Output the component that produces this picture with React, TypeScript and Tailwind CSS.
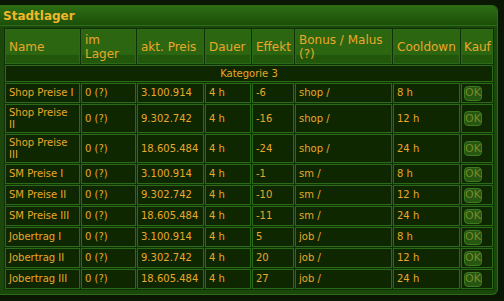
import React from 'react';

interface Row {
  name: string;
  price: string;
  effect: string;
  bonus: string;
  cooldown: string;
  tall?: boolean;
}

const rows: Row[] = [
  { name: 'Shop Preise I', price: '3.100.914', effect: '-6', bonus: 'shop /', cooldown: '8 h' },
  { name: 'Shop Preise II', price: '9.302.742', effect: '-16', bonus: 'shop /', cooldown: '12 h', tall: true },
  { name: 'Shop Preise III', price: '18.605.484', effect: '-24', bonus: 'shop /', cooldown: '24 h', tall: true },
  { name: 'SM Preise I', price: '3.100.914', effect: '-1', bonus: 'sm /', cooldown: '8 h' },
  { name: 'SM Preise II', price: '9.302.742', effect: '-10', bonus: 'sm /', cooldown: '12 h' },
  { name: 'SM Preise III', price: '18.605.484', effect: '-11', bonus: 'sm /', cooldown: '24 h' },
  { name: 'Jobertrag I', price: '3.100.914', effect: '5', bonus: 'job /', cooldown: '8 h' },
  { name: 'Jobertrag II', price: '9.302.742', effect: '20', bonus: 'job /', cooldown: '12 h' },
  { name: 'Jobertrag III', price: '18.605.484', effect: '27', bonus: 'job /', cooldown: '24 h' },
];

const headers = ['Name', 'im Lager', 'akt. Preis', 'Dauer', 'Effekt', 'Bonus / Malus (?)', 'Cooldown', 'Kauf'];
const widths = ['w-[75px]', 'w-[55px]', 'w-[67px]', 'w-[46px]', 'w-[42px]', 'w-[97px]', 'w-[67px]', 'w-[32px]'];

const td = 'border border-[#2b6a17] bg-[#0f2700] px-[3px] text-left align-middle';

const App: React.FC = () => {
  return (
    <div
      className="w-[504px] h-[301px] bg-[#0a1803] pt-[5px] text-[#e8a82a]"
      style={{ fontFamily: '"DejaVu Sans", Verdana, sans-serif' }}
    >
      <div className="w-[498px] h-[290px] rounded-r-[6px] border border-l-0 border-[#2c6a16] bg-[#1b470b] overflow-hidden">
        <div className="h-[20px] bg-gradient-to-b from-[#2e6d14] to-[#1c4f09] border-b border-[#2f6e18] pl-[3px] flex items-center">
          <span className="text-[12px] font-bold text-[#f0b82a] leading-none">Stadtlager</span>
        </div>

        <table className="ml-[4px] mt-[2px] w-[490px] table-fixed border-separate border-spacing-[1px] bg-[#10300a]">
          <colgroup>
            {widths.map((w, i) => (
              <col key={i} className={w} />
            ))}
          </colgroup>
          <thead>
            <tr className="h-[35px]">
              {headers.map((h, i) => (
                <th
                  key={h}
                  className={`border border-[#2b6a17] bg-[linear-gradient(to_bottom,#2c6611_0%,#2c6611_74%,#22560a_76%,#22560a_100%)] ${i === 7 ? 'px-[2px]' : 'px-[3px]'} text-left align-middle text-[12px] font-normal leading-[14px]`}
                >
                  {h}
                </th>
              ))}
            </tr>
          </thead>
          <tbody className="text-[10px] leading-[12px]">
            <tr className="h-[17px]">
              <td colSpan={8} className={`${td} text-center`} style={{ textAlign: 'center' }}>
                Kategorie 3
              </td>
            </tr>
            {rows.map((r) => (
              <tr key={r.name} className={r.tall ? 'h-[29px]' : 'h-[20px]'}>
                <td className={td}>{r.name}</td>
                <td className={td}>0 (?)</td>
                <td className={td}>{r.price}</td>
                <td className={td}>4 h</td>
                <td className={td}>{r.effect}</td>
                <td className={td}>{r.bonus}</td>
                <td className={td}>{r.cooldown}</td>
                <td className={`${td} pl-[2px]`}>
                  <span className="inline-flex h-[15px] w-[18px] items-center justify-center rounded-[4px] border border-[#3c7a22] bg-[#265610] text-[11px] text-[#758a28]">
                    OK
                  </span>
                </td>
              </tr>
            ))}
          </tbody>
        </table>
      </div>
    </div>
  );
};

export default App;
